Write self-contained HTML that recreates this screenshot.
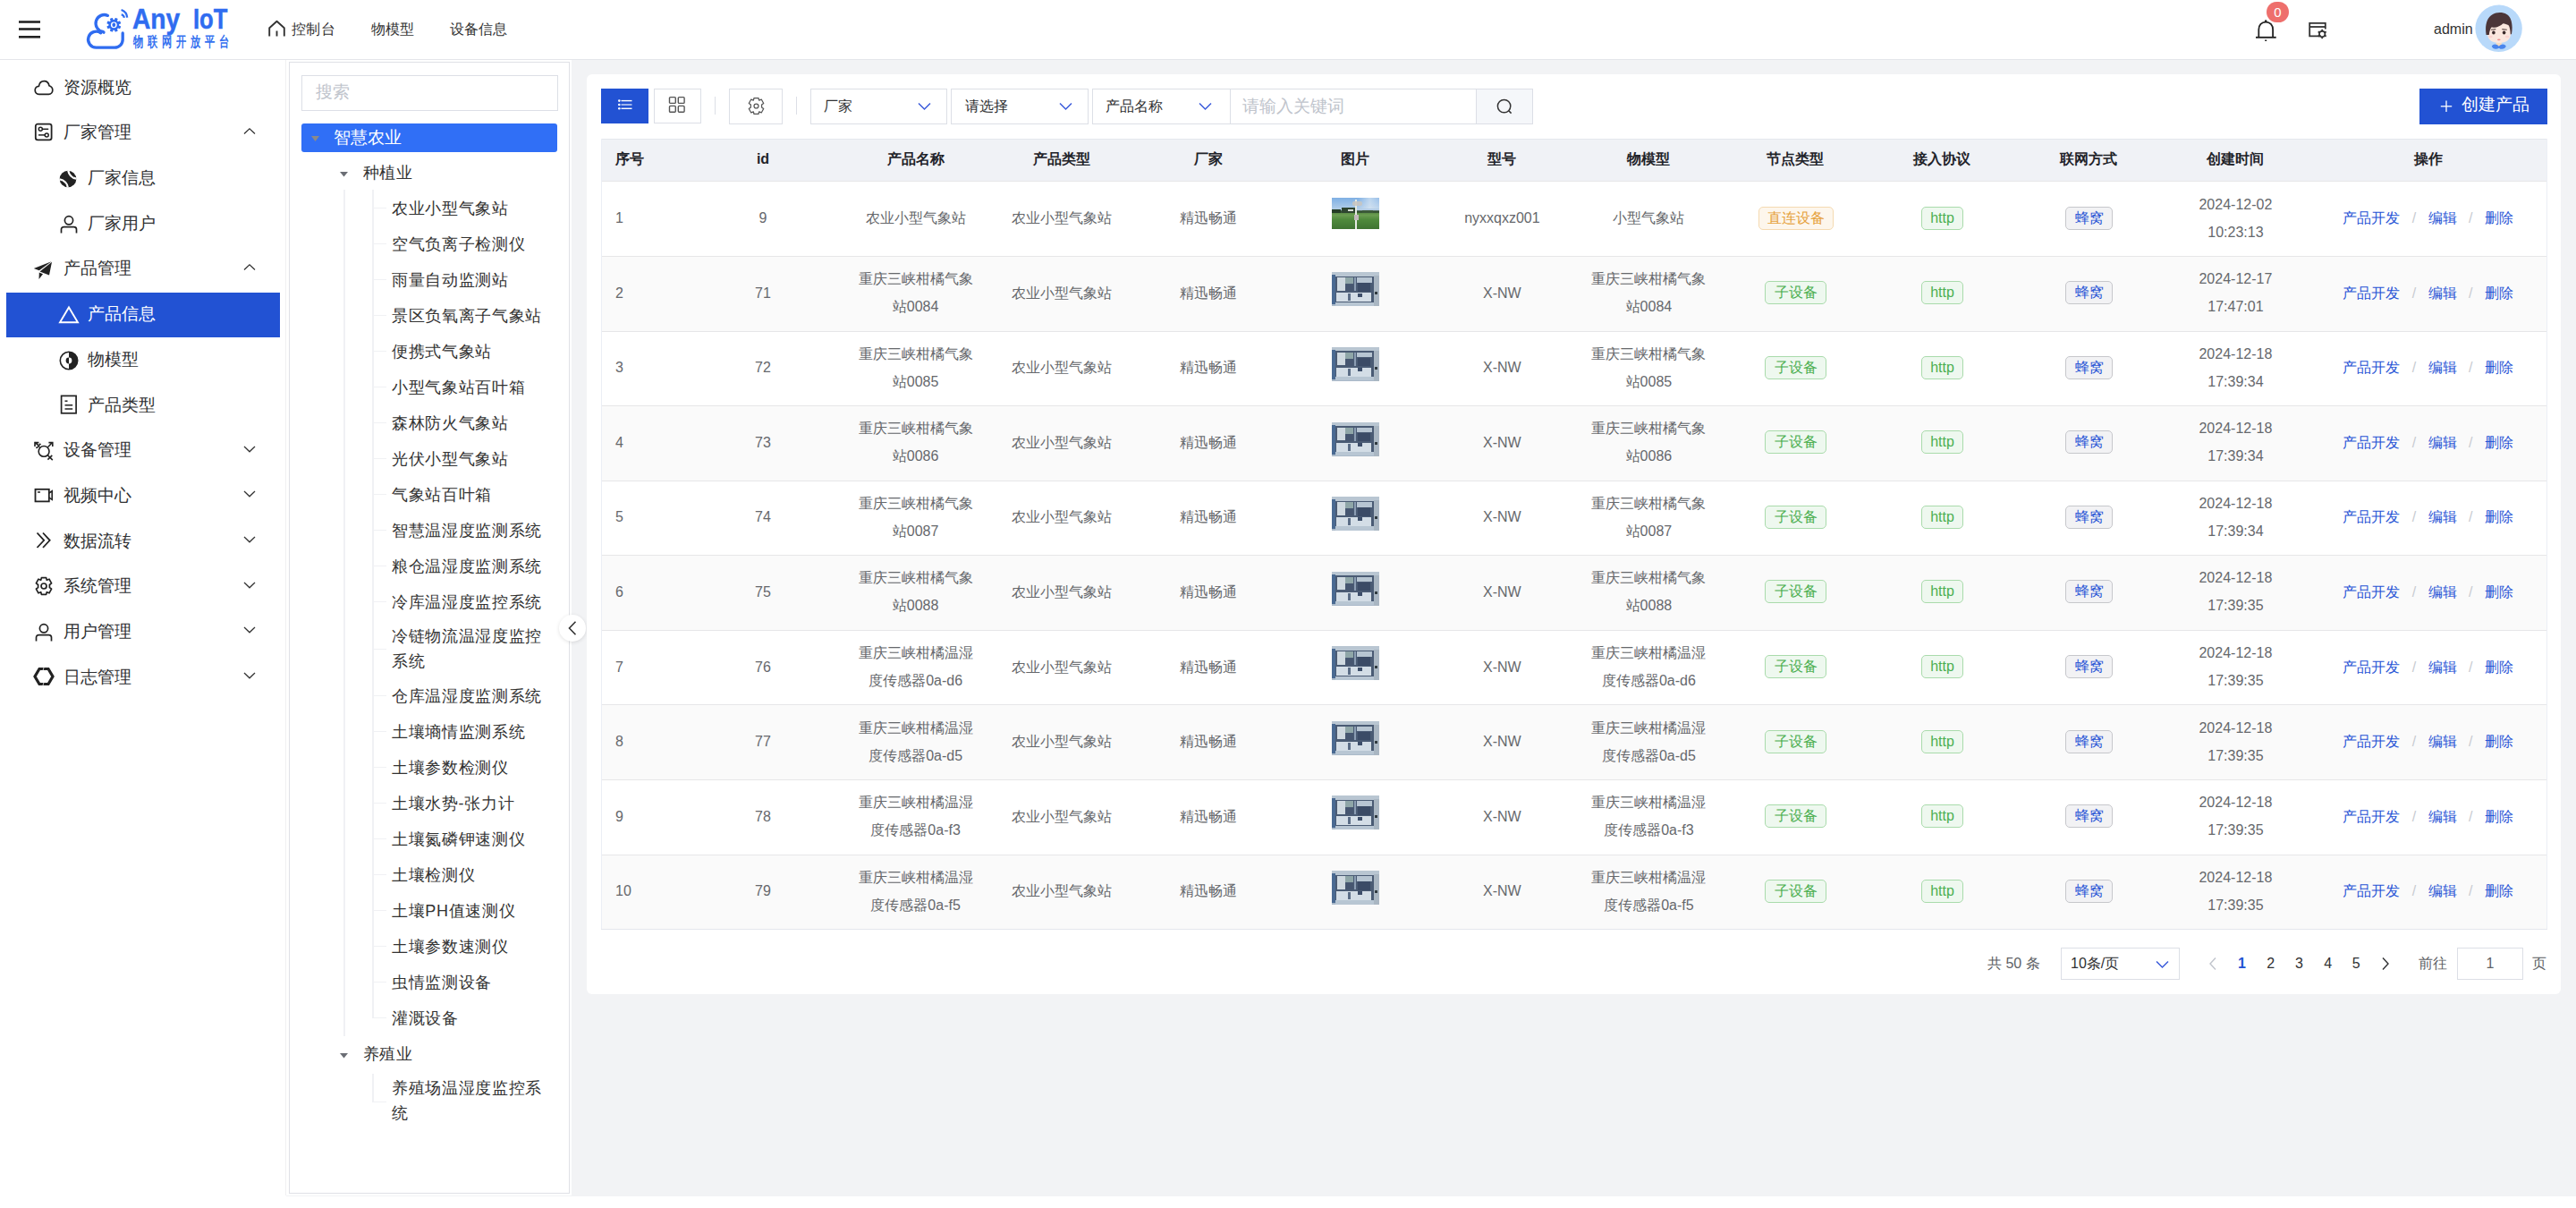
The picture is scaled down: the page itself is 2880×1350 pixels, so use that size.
<!DOCTYPE html>
<html><head><meta charset="utf-8"><title>Any IoT</title>
<style>
*{box-sizing:border-box;margin:0;padding:0}
html,body{width:2880px;height:1350px;overflow:hidden;background:#fff}
body{font-family:"Liberation Sans",sans-serif;color:#303133;position:relative}
.a{position:absolute;white-space:nowrap}
svg{position:absolute;overflow:visible}
.hdr{position:absolute;left:0;top:0;width:2880px;height:66px;background:#fff;border-bottom:1px solid #e4e6ea;box-sizing:content-box}
.mi{position:absolute;left:0;width:319px;font-size:19px;color:#303133;line-height:24px;height:24px}
.tt{position:absolute;font-size:18px;letter-spacing:0.65px;color:#333;line-height:28px;white-space:nowrap}
.th{position:absolute;top:154px;height:47px;line-height:47px;font-size:16px;font-weight:bold;color:#1f2329;text-align:center}
.td{position:absolute;font-size:16px;color:#66686c;line-height:31px;text-align:center;white-space:normal}
.tag{position:absolute;height:26px;line-height:24px;font-size:16px;border:1px solid;border-radius:5px;text-align:center}
.lnk{color:#2a56d6}
.sep{color:#c8cbd1;margin:0 13.4px}
</style></head><body>

<div class="hdr"></div>
<svg style="left:0;top:0" width="60" height="66"><g stroke="#222" stroke-width="2.6"><line x1="21" y1="24.5" x2="45" y2="24.5"/><line x1="21" y1="32.5" x2="45" y2="32.5"/><line x1="21" y1="41.3" x2="45" y2="41.3"/></g></svg>
<svg style="left:90px;top:4px" width="60" height="56" viewBox="0 0 60 56">
<g fill="none" stroke="#2f6cf0" stroke-width="3.3" stroke-linecap="round">
<path d="M30.5 13.4 A 9.5 9.5 0 1 0 24.9 31.4 L 26 32.2"/>
<path d="M22.7 32.8 A 9 9 0 1 0 17.5 49.2 L 38.2 49.2 A 9 9 0 0 0 47.2 40.2 L 47.2 33"/>
</g>
<g transform="translate(37.3,23.8)" fill="#2f6cf0">
<circle r="5.9"/>

<rect x="-1.6" y="-8" width="3.2" height="3.6" rx="0.6" transform="rotate(22.5)"/>
<rect x="-1.6" y="-8" width="3.2" height="3.6" rx="0.6" transform="rotate(67.5)"/>
<rect x="-1.6" y="-8" width="3.2" height="3.6" rx="0.6" transform="rotate(112.5)"/>
<rect x="-1.6" y="-8" width="3.2" height="3.6" rx="0.6" transform="rotate(157.5)"/>
<rect x="-1.6" y="-8" width="3.2" height="3.6" rx="0.6" transform="rotate(202.5)"/>
<rect x="-1.6" y="-8" width="3.2" height="3.6" rx="0.6" transform="rotate(247.5)"/>
<rect x="-1.6" y="-8" width="3.2" height="3.6" rx="0.6" transform="rotate(292.5)"/>
<rect x="-1.6" y="-8" width="3.2" height="3.6" rx="0.6" transform="rotate(337.5)"/>
<circle r="3.4" fill="#fff"/><ellipse rx="1.9" ry="2.4" fill="#2f6cf0"/></g>
<g fill="none" stroke="#2f6cf0" stroke-width="2.3" stroke-linecap="butt">
<path d="M45.6 7 A 10 10 0 0 1 52.2 15.6"/><path d="M45.8 12.2 A 4.8 4.8 0 0 1 49 15.8"/></g>
</svg>
<div class="a" style="left:148px;top:3px;font-size:32px;font-weight:bold;color:#2f6cf0;-webkit-text-stroke:0.5px #2f6cf0;line-height:36px;transform:scaleX(0.88);transform-origin:0 0">Any</div>
<div class="a" style="left:216px;top:3px;font-size:32px;font-weight:bold;color:#2f6cf0;-webkit-text-stroke:0.5px #2f6cf0;line-height:36px;transform:scaleX(0.80);transform-origin:0 0">IoT</div>
<div class="a" style="left:148.5px;top:35.4px;font-size:16px;font-weight:bold;color:#3471f0;line-height:24px;letter-spacing:6.9px;transform:scaleX(0.70);transform-origin:0 0">物联网开放平台</div>
<svg style="left:299px;top:22px" width="22" height="20" viewBox="0 0 22 20"><path d="M2.2 18.5 V9.2 L10.5 1.8 L18.8 9.2 V18.5" fill="none" stroke="#333" stroke-width="1.9" stroke-linejoin="round"/><line x1="10.5" y1="12.5" x2="10.5" y2="18.5" stroke="#333" stroke-width="1.9"/></svg>
<div class="a" style="left:325.5px;top:20.8px;font-size:16px;letter-spacing:0.6px;color:#333;line-height:24px">控制台</div>
<div class="a" style="left:415px;top:20.8px;font-size:16px;color:#333;line-height:24px">物模型</div>
<div class="a" style="left:503px;top:20.8px;font-size:16px;color:#333;line-height:24px">设备信息</div>
<svg style="left:2518px;top:18px" width="32" height="32" viewBox="0 0 32 32"><path d="M7.3 23.8 V15 C7.3 10 10.5 6.6 15.2 6.6 C19.9 6.6 23.1 10 23.1 15 V23.8" fill="none" stroke="#222" stroke-width="1.8"/><line x1="4" y1="23.8" x2="26.7" y2="23.8" stroke="#222" stroke-width="1.9"/><circle cx="15.2" cy="5.6" r="1.3" fill="#222"/><rect x="14.2" y="26.5" width="2" height="1.5" fill="#222"/></svg>
<div class="a" style="left:2534px;top:2px;width:25px;height:23px;border-radius:12px;background:#ee6f6c;color:#fff;font-size:15px;line-height:23px;text-align:center">0</div>
<svg style="left:2578px;top:22px" width="28" height="26" viewBox="0 0 28 26"><path d="M17 18.4 H4.2 V3.8 H21.8 V10.5" fill="none" stroke="#333" stroke-width="1.8"/><line x1="4.2" y1="8" x2="21.8" y2="8" stroke="#333" stroke-width="1.8"/><g transform="translate(18.2,16)"><circle r="3.2" fill="none" stroke="#333" stroke-width="1.8"/>
<rect x="-0.9" y="-5.2" width="1.8" height="2.2" fill="#333" transform="rotate(0)"/>
<rect x="-0.9" y="-5.2" width="1.8" height="2.2" fill="#333" transform="rotate(60)"/>
<rect x="-0.9" y="-5.2" width="1.8" height="2.2" fill="#333" transform="rotate(120)"/>
<rect x="-0.9" y="-5.2" width="1.8" height="2.2" fill="#333" transform="rotate(180)"/>
<rect x="-0.9" y="-5.2" width="1.8" height="2.2" fill="#333" transform="rotate(240)"/>
<rect x="-0.9" y="-5.2" width="1.8" height="2.2" fill="#333" transform="rotate(300)"/>
</g></svg>
<div class="a" style="left:2721px;top:21.2px;font-size:16px;color:#333;line-height:24px">admin</div>
<svg style="left:2767px;top:5px" width="54" height="54" viewBox="0 0 54 54">
<circle cx="26.6" cy="26.7" r="26.2" fill="#b8d9fa"/>
<path d="M24 41 L 29.5 41 L 30 47 L 23.5 47 Z" fill="#f6dcc0"/>
<path d="M14 27 C 14 17 19 12 27 12 C 35 12 40 17 40 27 L 40 33 C 39.5 39.5 35 43 27 43 C 19 43 14.5 39.5 14 33 Z" fill="#fbe7de"/>
<path d="M12.6 34 C 11 24 13 15 19.5 11.2 C 24 8.4 31 8.2 35.5 11 C 41.5 14.5 42.5 24 41 33 L 39.8 33.5 C 39.5 28 38.8 25 37.6 23.2 C 35.5 22 33.5 21.5 31.5 21.2 C 28 24.6 23 26.2 18.5 25.6 C 17 27.5 16.2 30 15.8 34 Z" fill="#4b3538"/>
<path d="M17.8 28.3 L 23.3 27.6" stroke="#5e4a48" stroke-width="1.1"/><path d="M30.3 27.6 L 35.8 28.3" stroke="#5e4a48" stroke-width="1.1"/>
<ellipse cx="20.9" cy="31.4" rx="1.8" ry="2" fill="#3a2a2a"/><ellipse cx="32.6" cy="31.4" rx="1.8" ry="2" fill="#3a2a2a"/>
<ellipse cx="17.5" cy="36" rx="2.2" ry="1.2" fill="#fbd3d0"/><ellipse cx="36" cy="36" rx="2.2" ry="1.2" fill="#fbd3d0"/>
<ellipse cx="26.8" cy="39.4" rx="1.8" ry="0.8" fill="#ef8f8f"/>
<path d="M18.8 46.8 C 20.5 43.5 24.5 44.2 26.8 46.8 C 29 44.2 33 43.5 34.8 46.8 C 33.5 50.3 29.5 50.5 26.8 48.8 C 24 50.5 20 50.3 18.8 46.8 Z" fill="#4a85ec"/>
</svg>
<div class="a" style="left:319px;top:67px;width:1px;height:1269px;background:#f0f0f2"></div>
<div class="a" style="left:7px;top:327px;width:306px;height:50px;background:#2252d3"></div>
<svg style="left:38px;top:86.0px" width="22" height="22" viewBox="0 0 22 22"><path d="M5.5 19.3 C 2.8 19.3 1.2 17.2 1.2 14.8 C 1.2 12.4 3 10.4 5.4 10.3 C 6 6.8 8.3 4.6 11.3 4.6 C 14.3 4.6 16.4 6.6 17 9.8 C 19.2 10.5 20.8 12.4 20.8 14.8 C 20.8 17.3 18.9 19.3 16.5 19.3 Z" fill="none" stroke="#222" stroke-width="1.7"/></svg>
<div class="a" style="left:70.7px;top:85.70px;font-size:19px;line-height:24px;color:#303133">资源概览</div>
<svg style="left:38px;top:136.69px" width="22" height="22" viewBox="0 0 22 22"><rect x="1.8" y="1.6" width="17.8" height="17.8" rx="2.3" fill="none" stroke="#222" stroke-width="1.8"/><circle cx="7.3" cy="7.3" r="2" fill="none" stroke="#222" stroke-width="1.5"/><line x1="9.3" y1="7.3" x2="16.2" y2="7.3" stroke="#222" stroke-width="1.5"/><circle cx="14.2" cy="13.9" r="2" fill="none" stroke="#222" stroke-width="1.5"/><line x1="5" y1="13.9" x2="12.2" y2="13.9" stroke="#222" stroke-width="1.5"/></svg>
<div class="a" style="left:70.7px;top:136.39px;font-size:19px;line-height:24px;color:#303133">厂家管理</div>
<svg style="left:271px;top:141.69px" width="16" height="10"><path d="M2 7.5 L 8 1.8 L 14 7.5" fill="none" stroke="#333" stroke-width="1.3"/></svg>
<svg style="left:65.0px;top:189.38px" width="22" height="22" viewBox="0 0 22 22"><circle cx="11" cy="11" r="9.3" fill="#222"/><path d="M11.2 1.5 Q 12.5 9 20.5 10.8 M 1.5 11.2 Q 9.5 13 10.8 20.5" fill="none" stroke="#fff" stroke-width="2.2"/><path d="M13.5 4.5 L 15.5 6.5 M 15.5 6.8 L 17.6 8.8 M 4.5 13.5 L 6.5 15.5 M 6.8 15.5 L 8.8 17.6" stroke="#222" stroke-width="0.9"/></svg>
<div class="a" style="left:97.5px;top:187.08px;font-size:19px;line-height:24px;color:#303133">厂家信息</div>
<svg style="left:65.5px;top:240.07px" width="22" height="22" viewBox="0 0 22 22"><circle cx="11" cy="6.3" r="4.6" fill="none" stroke="#222" stroke-width="1.7"/><path d="M2.5 20.5 V16.5 C 2.5 14.8 3.6 13.6 5.4 13.6 H16.6 C 18.4 13.6 19.5 14.8 19.5 16.5 V20.5" fill="none" stroke="#222" stroke-width="1.7"/></svg>
<div class="a" style="left:97.5px;top:237.77px;font-size:19px;line-height:24px;color:#303133">厂家用户</div>
<svg style="left:37px;top:290.76px" width="22" height="22" viewBox="0 0 22 22"><path d="M0.8 9 L 20.5 1.2 L 6.8 11.2 Z" fill="#222"/><path d="M7.5 12.6 L 21 1.8 L 18 16.5 Z" fill="#222"/><path d="M6.8 13.6 L 11 15.3 L 6.5 21 Z" fill="#222"/></svg>
<div class="a" style="left:70.7px;top:288.46px;font-size:19px;line-height:24px;color:#303133">产品管理</div>
<svg style="left:271px;top:293.76px" width="16" height="10"><path d="M2 7.5 L 8 1.8 L 14 7.5" fill="none" stroke="#333" stroke-width="1.3"/></svg>
<svg style="left:65.5px;top:339.45px" width="22" height="22" viewBox="0 0 22 22"><path d="M11 4.4 L 21 21.2 H 1 Z" fill="none" stroke="#fff" stroke-width="1.9" stroke-linejoin="miter"/></svg>
<div class="a" style="left:97.5px;top:339.15px;font-size:19px;line-height:24px;color:#fff">产品信息</div>
<svg style="left:65.5px;top:391.64px" width="22" height="22" viewBox="0 0 22 22"><circle cx="11" cy="11" r="9.7" fill="none" stroke="#222" stroke-width="1.6"/><path d="M11 1.3 A 9.7 9.7 0 0 1 11 20.7 Z" fill="#222"/><path d="M11 7.6 A 3.4 3.4 0 0 0 11 14.4 Z" fill="#222"/><path d="M11 7.6 A 3.4 3.4 0 0 1 11 14.4 Z" fill="#fff"/></svg>
<div class="a" style="left:97.5px;top:389.84px;font-size:19px;line-height:24px;color:#303133">物模型</div>
<svg style="left:65.5px;top:440.83px" width="22" height="22" viewBox="0 0 22 22"><rect x="2.6" y="1.4" width="16.5" height="19.4" fill="none" stroke="#222" stroke-width="1.7"/><line x1="6.5" y1="7.2" x2="9.5" y2="7.2" stroke="#222" stroke-width="1.5"/><line x1="6.5" y1="11.8" x2="15.2" y2="11.8" stroke="#222" stroke-width="1.5"/><line x1="6.5" y1="16" x2="15.2" y2="16" stroke="#222" stroke-width="1.5"/></svg>
<div class="a" style="left:97.5px;top:440.53px;font-size:19px;line-height:24px;color:#303133">产品类型</div>
<svg style="left:38px;top:491.52px" width="22" height="22" viewBox="0 0 22 22"><circle cx="11.1" cy="12.4" r="5.9" fill="none" stroke="#222" stroke-width="1.6"/><path d="M15.4 7.7 L 20.8 2.2 M 16.4 2.6 H 20.8 V 7" fill="none" stroke="#222" stroke-width="1.6"/><path d="M6.8 7.7 L 1 2.2 M 5.4 2.6 H 1 V 7 M 2.5 8.9 L 7.4 3.9" fill="none" stroke="#222" stroke-width="1.6"/><path d="M15.4 16.7 L 20.8 22.1 M 15.4 21.6 L 20.3 16.9" fill="none" stroke="#222" stroke-width="1.6"/></svg>
<div class="a" style="left:70.7px;top:491.22px;font-size:19px;line-height:24px;color:#303133">设备管理</div>
<svg style="left:271px;top:496.52px" width="16" height="10"><path d="M2 2 L 8 7.8 L 14 2" fill="none" stroke="#333" stroke-width="1.3"/></svg>
<svg style="left:38px;top:542.21px" width="22" height="22" viewBox="0 0 22 22"><rect x="1.5" y="4.8" width="15.3" height="13.6" fill="none" stroke="#222" stroke-width="1.8"/><path d="M16.8 9 L 20.2 6.8 V 16.4 L 16.8 14.2" fill="none" stroke="#222" stroke-width="1.6"/><line x1="4" y1="8" x2="7" y2="8" stroke="#222" stroke-width="1.5"/></svg>
<div class="a" style="left:70.7px;top:541.91px;font-size:19px;line-height:24px;color:#303133">视频中心</div>
<svg style="left:271px;top:547.21px" width="16" height="10"><path d="M2 2 L 8 7.8 L 14 2" fill="none" stroke="#333" stroke-width="1.3"/></svg>
<svg style="left:38px;top:592.9px" width="22" height="22" viewBox="0 0 22 22"><path d="M3.5 2.5 L 11.2 10.8 L 3.5 19 M 10 2.5 L 17.7 10.8 L 10 19" fill="none" stroke="#222" stroke-width="1.8"/></svg>
<div class="a" style="left:70.7px;top:592.60px;font-size:19px;line-height:24px;color:#303133">数据流转</div>
<svg style="left:271px;top:597.90px" width="16" height="10"><path d="M2 2 L 8 7.8 L 14 2" fill="none" stroke="#333" stroke-width="1.3"/></svg>
<svg style="left:38px;top:643.59px" width="22" height="22" viewBox="0 0 22 22"><path d="M8.4 1.6 H13.6 L14.3 4.3 L17 3.2 L19.6 7.8 L17.4 9.5 V12.5 L19.6 14.2 L17 18.8 L14.3 17.7 L13.6 20.4 H8.4 L7.7 17.7 L5 18.8 L2.4 14.2 L4.6 12.5 V9.5 L2.4 7.8 L5 3.2 L7.7 4.3 Z" fill="none" stroke="#222" stroke-width="1.7" stroke-linejoin="round"/><circle cx="11" cy="11" r="3" fill="none" stroke="#222" stroke-width="1.7"/></svg>
<div class="a" style="left:70.7px;top:643.29px;font-size:19px;line-height:24px;color:#303133">系统管理</div>
<svg style="left:271px;top:648.59px" width="16" height="10"><path d="M2 2 L 8 7.8 L 14 2" fill="none" stroke="#333" stroke-width="1.3"/></svg>
<svg style="left:38px;top:696.28px" width="22" height="22" viewBox="0 0 22 22"><circle cx="11" cy="6.3" r="4.6" fill="none" stroke="#222" stroke-width="1.7"/><path d="M2.5 20.5 V16.5 C 2.5 14.8 3.6 13.6 5.4 13.6 H16.6 C 18.4 13.6 19.5 14.8 19.5 16.5 V20.5" fill="none" stroke="#222" stroke-width="1.7"/></svg>
<div class="a" style="left:70.7px;top:693.98px;font-size:19px;line-height:24px;color:#303133">用户管理</div>
<svg style="left:271px;top:699.28px" width="16" height="10"><path d="M2 2 L 8 7.8 L 14 2" fill="none" stroke="#333" stroke-width="1.3"/></svg>
<svg style="left:38px;top:744.97px" width="22" height="22" viewBox="0 0 22 22"><path d="M6 2.5 H16 L 21 11 L 16 19.5 H6 L 1 11 Z" fill="none" stroke="#222" stroke-width="3.2" stroke-linejoin="miter"/><line x1="11" y1="1" x2="10" y2="4.5" stroke="#fff" stroke-width="0.7"/><line x1="11" y1="17.5" x2="10" y2="21" stroke="#fff" stroke-width="0.7"/></svg>
<div class="a" style="left:70.7px;top:744.67px;font-size:19px;line-height:24px;color:#303133">日志管理</div>
<svg style="left:271px;top:749.97px" width="16" height="10"><path d="M2 2 L 8 7.8 L 14 2" fill="none" stroke="#333" stroke-width="1.3"/></svg>
<div class="a" style="left:320px;top:67px;width:2560px;height:1269.5px;background:#f2f3f5"></div>
<div class="a" style="left:320px;top:67px;width:319px;height:1269px;background:#fff"></div>
<div class="a" style="left:323px;top:69px;width:314px;height:1265px;border:1px solid #dfe1e6"></div>
<div class="a" style="left:337px;top:84px;width:287px;height:40px;border:1px solid #dcdfe6;background:#fff"></div>
<div class="a" style="left:353px;top:91px;font-size:19px;line-height:24px;color:#c0c4cc">搜索</div>
<div class="a" style="left:337px;top:138px;width:286px;height:32px;border-radius:3px;background:#306ff6"></div>
<svg style="left:346px;top:150px" width="14" height="10"><path d="M2 2 L 11 2 L 6.5 8 Z" fill="#8a8a8a"/></svg>
<div class="a" style="left:373px;top:141px;font-size:19px;line-height:26px;color:#fff">智慧农业</div>
<svg style="left:378px;top:190px" width="14" height="10"><path d="M2 2 L 11 2 L 6.5 7.5 Z" fill="#6b6e75"/></svg>
<div class="tt" style="left:405.5px;top:179px">种植业</div>
<div class="tt" style="left:438px;top:218.60px">农业小型气象站</div>
<div class="tt" style="left:438px;top:258.60px">空气负离子检测仪</div>
<div class="tt" style="left:438px;top:298.60px">雨量自动监测站</div>
<div class="tt" style="left:438px;top:338.60px">景区负氧离子气象站</div>
<div class="tt" style="left:438px;top:378.60px">便携式气象站</div>
<div class="tt" style="left:438px;top:418.60px">小型气象站百叶箱</div>
<div class="tt" style="left:438px;top:458.60px">森林防火气象站</div>
<div class="tt" style="left:438px;top:498.60px">光伏小型气象站</div>
<div class="tt" style="left:438px;top:538.60px">气象站百叶箱</div>
<div class="tt" style="left:438px;top:578.60px">智慧温湿度监测系统</div>
<div class="tt" style="left:438px;top:618.60px">粮仓温湿度监测系统</div>
<div class="tt" style="left:438px;top:658.60px">冷库温湿度监控系统</div>
<div class="tt" style="left:438px;top:697.00px">冷链物流温湿度监控</div>
<div class="tt" style="left:438px;top:724.80px">系统</div>
<div class="tt" style="left:438px;top:763.80px">仓库温湿度监测系统</div>
<div class="tt" style="left:438px;top:803.80px">土壤墒情监测系统</div>
<div class="tt" style="left:438px;top:843.80px">土壤参数检测仪</div>
<div class="tt" style="left:438px;top:883.80px">土壤水势-张力计</div>
<div class="tt" style="left:438px;top:923.80px">土壤氮磷钾速测仪</div>
<div class="tt" style="left:438px;top:963.80px">土壤检测仪</div>
<div class="tt" style="left:438px;top:1003.80px">土壤PH值速测仪</div>
<div class="tt" style="left:438px;top:1043.80px">土壤参数速测仪</div>
<div class="tt" style="left:438px;top:1083.80px">虫情监测设备</div>
<div class="tt" style="left:438px;top:1123.80px">灌溉设备</div>
<div class="a" style="left:384px;top:212px;width:1.5px;height:946px;background:#f0f1f4"></div>
<div class="a" style="left:416px;top:212px;width:1.5px;height:925.8px;background:#f0f1f4"></div>
<div class="a" style="left:416px;top:232.10px;width:16px;height:1.2px;background:#f0f1f4"></div>
<div class="a" style="left:416px;top:272.10px;width:16px;height:1.2px;background:#f0f1f4"></div>
<div class="a" style="left:416px;top:312.10px;width:16px;height:1.2px;background:#f0f1f4"></div>
<div class="a" style="left:416px;top:352.10px;width:16px;height:1.2px;background:#f0f1f4"></div>
<div class="a" style="left:416px;top:392.10px;width:16px;height:1.2px;background:#f0f1f4"></div>
<div class="a" style="left:416px;top:432.10px;width:16px;height:1.2px;background:#f0f1f4"></div>
<div class="a" style="left:416px;top:472.10px;width:16px;height:1.2px;background:#f0f1f4"></div>
<div class="a" style="left:416px;top:512.10px;width:16px;height:1.2px;background:#f0f1f4"></div>
<div class="a" style="left:416px;top:552.10px;width:16px;height:1.2px;background:#f0f1f4"></div>
<div class="a" style="left:416px;top:592.10px;width:16px;height:1.2px;background:#f0f1f4"></div>
<div class="a" style="left:416px;top:632.10px;width:16px;height:1.2px;background:#f0f1f4"></div>
<div class="a" style="left:416px;top:672.10px;width:16px;height:1.2px;background:#f0f1f4"></div>
<div class="a" style="left:416px;top:724.70px;width:16px;height:1.2px;background:#f0f1f4"></div>
<div class="a" style="left:416px;top:777.30px;width:16px;height:1.2px;background:#f0f1f4"></div>
<div class="a" style="left:416px;top:817.30px;width:16px;height:1.2px;background:#f0f1f4"></div>
<div class="a" style="left:416px;top:857.30px;width:16px;height:1.2px;background:#f0f1f4"></div>
<div class="a" style="left:416px;top:897.30px;width:16px;height:1.2px;background:#f0f1f4"></div>
<div class="a" style="left:416px;top:937.30px;width:16px;height:1.2px;background:#f0f1f4"></div>
<div class="a" style="left:416px;top:977.30px;width:16px;height:1.2px;background:#f0f1f4"></div>
<div class="a" style="left:416px;top:1017.30px;width:16px;height:1.2px;background:#f0f1f4"></div>
<div class="a" style="left:416px;top:1057.30px;width:16px;height:1.2px;background:#f0f1f4"></div>
<div class="a" style="left:416px;top:1097.30px;width:16px;height:1.2px;background:#f0f1f4"></div>
<div class="a" style="left:416px;top:1137.30px;width:16px;height:1.2px;background:#f0f1f4"></div>
<svg style="left:378px;top:1175px" width="14" height="10"><path d="M2 2 L 11 2 L 6.5 7.5 Z" fill="#6b6e75"/></svg>
<div class="tt" style="left:405.5px;top:1163.8px">养殖业</div>
<div class="tt" style="left:438px;top:1202.2px">养殖场温湿度监控系</div>
<div class="tt" style="left:438px;top:1230px">统</div>
<div class="a" style="left:416px;top:1200px;width:1.5px;height:31px;background:#f0f1f4"></div>
<div class="a" style="left:416px;top:1230.8px;width:16px;height:1.2px;background:#f0f1f4"></div>
<div class="a" style="left:625px;top:687px;width:30px;height:30px;border-radius:50%;background:#fff;box-shadow:0 1px 4px rgba(0,0,0,0.12)"></div>
<svg style="left:630px;top:692px" width="20" height="20"><path d="M13.5 2.8 L 6.5 10 L 13.5 17.2" fill="none" stroke="#333" stroke-width="1.6"/></svg>
<div class="a" style="left:656px;top:83px;width:2207px;height:1028px;background:#fff;border-radius:6px"></div>
<div class="a" style="left:672px;top:99px;width:53px;height:39px;background:#2252d3"></div>
<svg style="left:688px;top:108px" width="22" height="20"><g fill="#fff"><circle cx="4.3" cy="4.6" r="1.3"/><circle cx="4.3" cy="9" r="1.3"/><circle cx="4.3" cy="13.3" r="1.3"/><rect x="6.5" y="3.9" width="12" height="1.4"/><rect x="6.5" y="8.3" width="12" height="1.4" opacity="0.8"/><rect x="6.5" y="12.6" width="12" height="1.4"/></g></svg>
<div class="a" style="left:731px;top:99px;width:53px;height:39px;border:1px solid #dcdfe6"></div>
<svg style="left:744px;top:104px" width="26" height="26"><g fill="none" stroke="#555" stroke-width="1.4"><rect x="4.5" y="4.6" width="6.8" height="6.8" rx="1"/><rect x="14.3" y="4.6" width="6.8" height="6.8" rx="1"/><rect x="4.5" y="14.4" width="6.8" height="6.8" rx="1"/><rect x="14.3" y="14.4" width="6.8" height="6.8" rx="1"/></g></svg>
<div class="a" style="left:799px;top:108px;width:1px;height:20px;background:#dcdfe6"></div>
<div class="a" style="left:815px;top:99px;width:60px;height:40px;border:1px solid #dcdfe6"></div>
<svg style="left:835px;top:108px" width="21" height="21" viewBox="0 0 22 22"><path d="M8.4 1.6 H13.6 L14.3 4.3 L17 3.2 L19.6 7.8 L17.4 9.5 V12.5 L19.6 14.2 L17 18.8 L14.3 17.7 L13.6 20.4 H8.4 L7.7 17.7 L5 18.8 L2.4 14.2 L4.6 12.5 V9.5 L2.4 7.8 L5 3.2 L7.7 4.3 Z" fill="none" stroke="#555" stroke-width="1.3" stroke-linejoin="round"/><circle cx="11" cy="11" r="2.6" fill="none" stroke="#555" stroke-width="1.3"/></svg>
<div class="a" style="left:890px;top:108px;width:1px;height:20px;background:#dcdfe6"></div>
<div class="a" style="left:906px;top:99px;width:153px;height:40px;border:1px solid #dcdfe6"></div>
<div class="a" style="left:921px;top:107px;font-size:16px;line-height:24px;color:#303133">厂家</div>
<svg style="left:1025px;top:113px" width="18" height="12"><path d="M2 2.5 L 8.5 9 L 15 2.5" fill="none" stroke="#3b5bdb" stroke-width="1.5"/></svg>
<div class="a" style="left:1063px;top:99px;width:154px;height:40px;border:1px solid #dcdfe6"></div>
<div class="a" style="left:1079px;top:107px;font-size:16px;line-height:24px;color:#303133">请选择</div>
<svg style="left:1183px;top:113px" width="18" height="12"><path d="M2 2.5 L 8.5 9 L 15 2.5" fill="none" stroke="#3b5bdb" stroke-width="1.5"/></svg>
<div class="a" style="left:1221px;top:99px;width:493px;height:40px;border:1px solid #dcdfe6"></div>
<div class="a" style="left:1236px;top:107px;font-size:16px;line-height:24px;color:#303133">产品名称</div>
<svg style="left:1339px;top:113px" width="18" height="12"><path d="M2 2.5 L 8.5 9 L 15 2.5" fill="none" stroke="#3b5bdb" stroke-width="1.5"/></svg>
<div class="a" style="left:1375px;top:100px;width:1px;height:38px;background:#dcdfe6"></div>
<div class="a" style="left:1389px;top:105px;font-size:18.7px;line-height:28px;color:#c0c4cc">请输入关键词</div>
<div class="a" style="left:1650px;top:100px;width:63px;height:38px;background:#f5f7fa;border-left:1px solid #dcdfe6"></div>
<svg style="left:1670px;top:107px" width="24" height="24"><circle cx="11.6" cy="11.6" r="7.2" fill="none" stroke="#333" stroke-width="1.5"/><line x1="16.8" y1="16.8" x2="19.6" y2="19.6" stroke="#333" stroke-width="1.6"/></svg>
<div class="a" style="left:2705px;top:99px;width:143px;height:40px;background:#2252d3"></div>
<svg style="left:2727px;top:110.5px" width="16" height="16"><g stroke="#fff" stroke-width="1.3"><line x1="8" y1="1.5" x2="8" y2="14"/><line x1="1.8" y1="7.8" x2="14.2" y2="7.8"/></g></svg>
<div class="a" style="left:2751.5px;top:103.4px;font-size:19px;line-height:28px;color:#fff">创建产品</div>
<div class="a" style="left:672px;top:155px;width:2176px;height:47px;background:#f0f2f6;border-top:1px solid #e4e7ed"></div>
<div class="th" style="left:688px;width:76.2px;text-align:left">序号</div>
<div class="th" style="left:764.2px;width:177.6px">id</div>
<div class="th" style="left:941.8px;width:163.6px">产品名称</div>
<div class="th" style="left:1105.4px;width:164.0px">产品类型</div>
<div class="th" style="left:1269.4px;width:164.0px">厂家</div>
<div class="th" style="left:1433.4px;width:164.0px">图片</div>
<div class="th" style="left:1597.4px;width:164.0px">型号</div>
<div class="th" style="left:1761.4px;width:164.0px">物模型</div>
<div class="th" style="left:1925.4px;width:164.0px">节点类型</div>
<div class="th" style="left:2089.4px;width:164.0px">接入协议</div>
<div class="th" style="left:2253.4px;width:164.0px">联网方式</div>
<div class="th" style="left:2417.4px;width:164.0px">创建时间</div>
<div class="th" style="left:2581.4px;width:266.6px">操作</div>
<div class="a" style="left:672px;top:202.40px;width:2176px;height:83.58px;background:#fff;border-top:1px solid #e6e6e8"></div>
<div class="td" style="left:688px;top:228.09px;text-align:left;color:#66686c">1</div>
<div class="td" style="left:764.2px;width:177.6px;top:228.09px;color:#66686c">9</div>
<div class="td" style="left:941.8px;width:163.6px;top:228.09px;color:#66686c">农业小型气象站</div>
<div class="td" style="left:1105.4px;width:164.0px;top:228.09px;color:#66686c">农业小型气象站</div>
<div class="td" style="left:1269.4px;width:164.0px;top:228.09px;color:#66686c">精迅畅通</div>
<div class="a" style="left:1489px;top:221.00px;width:53px;height:35px"><div style="position:absolute;left:0;top:0;width:53px;height:35px;overflow:hidden;background:linear-gradient(180deg,#7fb0e4 0%,#a8c8e8 30%,#b9cfe4 40%,#2f4a2e 42%,#3a5a34 48%,#5d8f47 50%,#6b9d52 55%,#4f8a3c 70%,#3f7432 100%)"><div style="position:absolute;left:0;top:0;width:53px;height:12px;background:linear-gradient(90deg,rgba(255,255,255,0) 0%,rgba(255,255,255,0) 55%,rgba(230,238,245,0.6) 80%,rgba(255,255,255,0.2) 100%)"></div><div style="position:absolute;left:11px;top:11px;width:15px;height:6px;background:#2e4530"></div><div style="position:absolute;left:18px;top:13px;width:6px;height:2px;background:#d8dcd6"></div><div style="position:absolute;left:0;top:13px;width:10px;height:4px;background:#243d25"></div><div style="position:absolute;left:34px;top:14px;width:12px;height:3px;background:#3c5a3a"></div><div style="position:absolute;left:26px;top:2px;width:1.5px;height:33px;background:#e6ebe4"></div><div style="position:absolute;left:23px;top:4px;width:11px;height:5px;background:#c9c6bf;border-radius:2px;opacity:0.85"></div><div style="position:absolute;left:25px;top:19px;width:5px;height:6px;background:#c3b9bd"></div></div></div>
<div class="td" style="left:1597.4px;width:164.0px;top:228.09px;color:#66686c">nyxxqxz001</div>
<div class="td" style="left:1761.4px;width:164.0px;top:228.09px;color:#66686c">小型气象站</div>
<div class="tag" style="left:1965.5px;top:230.59px;width:84px;color:#e6a23c;background:#fdf6ec;border-color:#f5dab1">直连设备</div>
<div class="tag" style="left:2148px;top:230.59px;width:47px;color:#4caf50;background:#eef8ef;border-color:#a9dbab">http</div>
<div class="tag" style="left:2309px;top:230.59px;width:53px;color:#2a56d6;background:#f2f2f4;border-color:#c6c7cb">蜂窝</div>
<div class="td" style="left:2417.4px;width:164.0px;top:212.59px;color:#66686c">2024-12-02<br>10:23:13</div>
<div class="td" style="left:2581.4px;width:266.6px;top:228.09px"><span class="lnk">产品开发</span><span class="sep">/</span><span class="lnk">编辑</span><span class="sep">/</span><span class="lnk">删除</span></div>
<div class="a" style="left:672px;top:285.98px;width:2176px;height:83.58px;background:#fafafa;border-top:1px solid #e6e6e8"></div>
<div class="td" style="left:688px;top:311.67px;text-align:left;color:#66686c">2</div>
<div class="td" style="left:764.2px;width:177.6px;top:311.67px;color:#66686c">71</div>
<div class="td" style="left:941.8px;width:163.6px;top:296.17px;color:#66686c">重庆三峡柑橘气象<br>站0084</div>
<div class="td" style="left:1105.4px;width:164.0px;top:311.67px;color:#66686c">农业小型气象站</div>
<div class="td" style="left:1269.4px;width:164.0px;top:311.67px;color:#66686c">精迅畅通</div>
<div class="a" style="left:1489px;top:304.38px;width:53px;height:38px"><div style="position:absolute;left:0;top:0;width:53px;height:38px;overflow:hidden;background:#aab9c9"><div style="position:absolute;left:0;top:0;width:53px;height:5px;background:#b9c6d2"></div><div style="position:absolute;left:0;top:3px;width:4px;height:33px;background:#4a6a92"></div><div style="position:absolute;left:4px;top:4.5px;width:43px;height:29px;background:#4a5b74"></div><div style="position:absolute;left:5.5px;top:6px;width:9px;height:14.5px;background:#cfd9e0"></div><div style="position:absolute;left:14.7px;top:6px;width:9.7px;height:7px;background:#8fa6a8"></div><div style="position:absolute;left:14.7px;top:13.5px;width:9.7px;height:7.5px;background:#465670"></div><div style="position:absolute;left:25px;top:6px;width:2px;height:15px;background:#8b9db3"></div><div style="position:absolute;left:28px;top:6px;width:17px;height:5.5px;background:#b7c5d2"></div><div style="position:absolute;left:28.8px;top:12px;width:14px;height:9.5px;background:#3b4b66"></div><div style="position:absolute;left:5.4px;top:23px;width:38.7px;height:10px;background:#d3dde6"></div><div style="position:absolute;left:17.5px;top:24px;width:3.5px;height:8px;background:#5a6c86"></div><div style="position:absolute;left:28.8px;top:23.3px;width:5.6px;height:4px;background:#3d4e6a"></div><div style="position:absolute;left:4px;top:33.3px;width:45px;height:4.2px;background:#b8c6d3"></div><div style="position:absolute;left:47px;top:4px;width:6px;height:34px;background:#a9b6c2"></div><div style="position:absolute;left:48px;top:22px;width:3px;height:3px;background:#303a40"></div></div></div>
<div class="td" style="left:1597.4px;width:164.0px;top:311.67px;color:#66686c">X-NW</div>
<div class="td" style="left:1761.4px;width:164.0px;top:296.17px;color:#66686c">重庆三峡柑橘气象<br>站0084</div>
<div class="tag" style="left:1973px;top:314.17px;width:69px;color:#4caf50;background:#eef8ef;border-color:#a9dbab">子设备</div>
<div class="tag" style="left:2148px;top:314.17px;width:47px;color:#4caf50;background:#eef8ef;border-color:#a9dbab">http</div>
<div class="tag" style="left:2309px;top:314.17px;width:53px;color:#2a56d6;background:#f2f2f4;border-color:#c6c7cb">蜂窝</div>
<div class="td" style="left:2417.4px;width:164.0px;top:296.17px;color:#66686c">2024-12-17<br>17:47:01</div>
<div class="td" style="left:2581.4px;width:266.6px;top:311.67px"><span class="lnk">产品开发</span><span class="sep">/</span><span class="lnk">编辑</span><span class="sep">/</span><span class="lnk">删除</span></div>
<div class="a" style="left:672px;top:369.56px;width:2176px;height:83.58px;background:#fff;border-top:1px solid #e6e6e8"></div>
<div class="td" style="left:688px;top:395.25px;text-align:left;color:#66686c">3</div>
<div class="td" style="left:764.2px;width:177.6px;top:395.25px;color:#66686c">72</div>
<div class="td" style="left:941.8px;width:163.6px;top:379.75px;color:#66686c">重庆三峡柑橘气象<br>站0085</div>
<div class="td" style="left:1105.4px;width:164.0px;top:395.25px;color:#66686c">农业小型气象站</div>
<div class="td" style="left:1269.4px;width:164.0px;top:395.25px;color:#66686c">精迅畅通</div>
<div class="a" style="left:1489px;top:387.96px;width:53px;height:38px"><div style="position:absolute;left:0;top:0;width:53px;height:38px;overflow:hidden;background:#aab9c9"><div style="position:absolute;left:0;top:0;width:53px;height:5px;background:#b9c6d2"></div><div style="position:absolute;left:0;top:3px;width:4px;height:33px;background:#4a6a92"></div><div style="position:absolute;left:4px;top:4.5px;width:43px;height:29px;background:#4a5b74"></div><div style="position:absolute;left:5.5px;top:6px;width:9px;height:14.5px;background:#cfd9e0"></div><div style="position:absolute;left:14.7px;top:6px;width:9.7px;height:7px;background:#8fa6a8"></div><div style="position:absolute;left:14.7px;top:13.5px;width:9.7px;height:7.5px;background:#465670"></div><div style="position:absolute;left:25px;top:6px;width:2px;height:15px;background:#8b9db3"></div><div style="position:absolute;left:28px;top:6px;width:17px;height:5.5px;background:#b7c5d2"></div><div style="position:absolute;left:28.8px;top:12px;width:14px;height:9.5px;background:#3b4b66"></div><div style="position:absolute;left:5.4px;top:23px;width:38.7px;height:10px;background:#d3dde6"></div><div style="position:absolute;left:17.5px;top:24px;width:3.5px;height:8px;background:#5a6c86"></div><div style="position:absolute;left:28.8px;top:23.3px;width:5.6px;height:4px;background:#3d4e6a"></div><div style="position:absolute;left:4px;top:33.3px;width:45px;height:4.2px;background:#b8c6d3"></div><div style="position:absolute;left:47px;top:4px;width:6px;height:34px;background:#a9b6c2"></div><div style="position:absolute;left:48px;top:22px;width:3px;height:3px;background:#303a40"></div></div></div>
<div class="td" style="left:1597.4px;width:164.0px;top:395.25px;color:#66686c">X-NW</div>
<div class="td" style="left:1761.4px;width:164.0px;top:379.75px;color:#66686c">重庆三峡柑橘气象<br>站0085</div>
<div class="tag" style="left:1973px;top:397.75px;width:69px;color:#4caf50;background:#eef8ef;border-color:#a9dbab">子设备</div>
<div class="tag" style="left:2148px;top:397.75px;width:47px;color:#4caf50;background:#eef8ef;border-color:#a9dbab">http</div>
<div class="tag" style="left:2309px;top:397.75px;width:53px;color:#2a56d6;background:#f2f2f4;border-color:#c6c7cb">蜂窝</div>
<div class="td" style="left:2417.4px;width:164.0px;top:379.75px;color:#66686c">2024-12-18<br>17:39:34</div>
<div class="td" style="left:2581.4px;width:266.6px;top:395.25px"><span class="lnk">产品开发</span><span class="sep">/</span><span class="lnk">编辑</span><span class="sep">/</span><span class="lnk">删除</span></div>
<div class="a" style="left:672px;top:453.14px;width:2176px;height:83.58px;background:#fafafa;border-top:1px solid #e6e6e8"></div>
<div class="td" style="left:688px;top:478.83px;text-align:left;color:#66686c">4</div>
<div class="td" style="left:764.2px;width:177.6px;top:478.83px;color:#66686c">73</div>
<div class="td" style="left:941.8px;width:163.6px;top:463.33px;color:#66686c">重庆三峡柑橘气象<br>站0086</div>
<div class="td" style="left:1105.4px;width:164.0px;top:478.83px;color:#66686c">农业小型气象站</div>
<div class="td" style="left:1269.4px;width:164.0px;top:478.83px;color:#66686c">精迅畅通</div>
<div class="a" style="left:1489px;top:471.54px;width:53px;height:38px"><div style="position:absolute;left:0;top:0;width:53px;height:38px;overflow:hidden;background:#aab9c9"><div style="position:absolute;left:0;top:0;width:53px;height:5px;background:#b9c6d2"></div><div style="position:absolute;left:0;top:3px;width:4px;height:33px;background:#4a6a92"></div><div style="position:absolute;left:4px;top:4.5px;width:43px;height:29px;background:#4a5b74"></div><div style="position:absolute;left:5.5px;top:6px;width:9px;height:14.5px;background:#cfd9e0"></div><div style="position:absolute;left:14.7px;top:6px;width:9.7px;height:7px;background:#8fa6a8"></div><div style="position:absolute;left:14.7px;top:13.5px;width:9.7px;height:7.5px;background:#465670"></div><div style="position:absolute;left:25px;top:6px;width:2px;height:15px;background:#8b9db3"></div><div style="position:absolute;left:28px;top:6px;width:17px;height:5.5px;background:#b7c5d2"></div><div style="position:absolute;left:28.8px;top:12px;width:14px;height:9.5px;background:#3b4b66"></div><div style="position:absolute;left:5.4px;top:23px;width:38.7px;height:10px;background:#d3dde6"></div><div style="position:absolute;left:17.5px;top:24px;width:3.5px;height:8px;background:#5a6c86"></div><div style="position:absolute;left:28.8px;top:23.3px;width:5.6px;height:4px;background:#3d4e6a"></div><div style="position:absolute;left:4px;top:33.3px;width:45px;height:4.2px;background:#b8c6d3"></div><div style="position:absolute;left:47px;top:4px;width:6px;height:34px;background:#a9b6c2"></div><div style="position:absolute;left:48px;top:22px;width:3px;height:3px;background:#303a40"></div></div></div>
<div class="td" style="left:1597.4px;width:164.0px;top:478.83px;color:#66686c">X-NW</div>
<div class="td" style="left:1761.4px;width:164.0px;top:463.33px;color:#66686c">重庆三峡柑橘气象<br>站0086</div>
<div class="tag" style="left:1973px;top:481.33px;width:69px;color:#4caf50;background:#eef8ef;border-color:#a9dbab">子设备</div>
<div class="tag" style="left:2148px;top:481.33px;width:47px;color:#4caf50;background:#eef8ef;border-color:#a9dbab">http</div>
<div class="tag" style="left:2309px;top:481.33px;width:53px;color:#2a56d6;background:#f2f2f4;border-color:#c6c7cb">蜂窝</div>
<div class="td" style="left:2417.4px;width:164.0px;top:463.33px;color:#66686c">2024-12-18<br>17:39:34</div>
<div class="td" style="left:2581.4px;width:266.6px;top:478.83px"><span class="lnk">产品开发</span><span class="sep">/</span><span class="lnk">编辑</span><span class="sep">/</span><span class="lnk">删除</span></div>
<div class="a" style="left:672px;top:536.72px;width:2176px;height:83.58px;background:#fff;border-top:1px solid #e6e6e8"></div>
<div class="td" style="left:688px;top:562.41px;text-align:left;color:#66686c">5</div>
<div class="td" style="left:764.2px;width:177.6px;top:562.41px;color:#66686c">74</div>
<div class="td" style="left:941.8px;width:163.6px;top:546.91px;color:#66686c">重庆三峡柑橘气象<br>站0087</div>
<div class="td" style="left:1105.4px;width:164.0px;top:562.41px;color:#66686c">农业小型气象站</div>
<div class="td" style="left:1269.4px;width:164.0px;top:562.41px;color:#66686c">精迅畅通</div>
<div class="a" style="left:1489px;top:555.12px;width:53px;height:38px"><div style="position:absolute;left:0;top:0;width:53px;height:38px;overflow:hidden;background:#aab9c9"><div style="position:absolute;left:0;top:0;width:53px;height:5px;background:#b9c6d2"></div><div style="position:absolute;left:0;top:3px;width:4px;height:33px;background:#4a6a92"></div><div style="position:absolute;left:4px;top:4.5px;width:43px;height:29px;background:#4a5b74"></div><div style="position:absolute;left:5.5px;top:6px;width:9px;height:14.5px;background:#cfd9e0"></div><div style="position:absolute;left:14.7px;top:6px;width:9.7px;height:7px;background:#8fa6a8"></div><div style="position:absolute;left:14.7px;top:13.5px;width:9.7px;height:7.5px;background:#465670"></div><div style="position:absolute;left:25px;top:6px;width:2px;height:15px;background:#8b9db3"></div><div style="position:absolute;left:28px;top:6px;width:17px;height:5.5px;background:#b7c5d2"></div><div style="position:absolute;left:28.8px;top:12px;width:14px;height:9.5px;background:#3b4b66"></div><div style="position:absolute;left:5.4px;top:23px;width:38.7px;height:10px;background:#d3dde6"></div><div style="position:absolute;left:17.5px;top:24px;width:3.5px;height:8px;background:#5a6c86"></div><div style="position:absolute;left:28.8px;top:23.3px;width:5.6px;height:4px;background:#3d4e6a"></div><div style="position:absolute;left:4px;top:33.3px;width:45px;height:4.2px;background:#b8c6d3"></div><div style="position:absolute;left:47px;top:4px;width:6px;height:34px;background:#a9b6c2"></div><div style="position:absolute;left:48px;top:22px;width:3px;height:3px;background:#303a40"></div></div></div>
<div class="td" style="left:1597.4px;width:164.0px;top:562.41px;color:#66686c">X-NW</div>
<div class="td" style="left:1761.4px;width:164.0px;top:546.91px;color:#66686c">重庆三峡柑橘气象<br>站0087</div>
<div class="tag" style="left:1973px;top:564.91px;width:69px;color:#4caf50;background:#eef8ef;border-color:#a9dbab">子设备</div>
<div class="tag" style="left:2148px;top:564.91px;width:47px;color:#4caf50;background:#eef8ef;border-color:#a9dbab">http</div>
<div class="tag" style="left:2309px;top:564.91px;width:53px;color:#2a56d6;background:#f2f2f4;border-color:#c6c7cb">蜂窝</div>
<div class="td" style="left:2417.4px;width:164.0px;top:546.91px;color:#66686c">2024-12-18<br>17:39:34</div>
<div class="td" style="left:2581.4px;width:266.6px;top:562.41px"><span class="lnk">产品开发</span><span class="sep">/</span><span class="lnk">编辑</span><span class="sep">/</span><span class="lnk">删除</span></div>
<div class="a" style="left:672px;top:620.30px;width:2176px;height:83.58px;background:#fafafa;border-top:1px solid #e6e6e8"></div>
<div class="td" style="left:688px;top:645.99px;text-align:left;color:#66686c">6</div>
<div class="td" style="left:764.2px;width:177.6px;top:645.99px;color:#66686c">75</div>
<div class="td" style="left:941.8px;width:163.6px;top:630.49px;color:#66686c">重庆三峡柑橘气象<br>站0088</div>
<div class="td" style="left:1105.4px;width:164.0px;top:645.99px;color:#66686c">农业小型气象站</div>
<div class="td" style="left:1269.4px;width:164.0px;top:645.99px;color:#66686c">精迅畅通</div>
<div class="a" style="left:1489px;top:638.70px;width:53px;height:38px"><div style="position:absolute;left:0;top:0;width:53px;height:38px;overflow:hidden;background:#aab9c9"><div style="position:absolute;left:0;top:0;width:53px;height:5px;background:#b9c6d2"></div><div style="position:absolute;left:0;top:3px;width:4px;height:33px;background:#4a6a92"></div><div style="position:absolute;left:4px;top:4.5px;width:43px;height:29px;background:#4a5b74"></div><div style="position:absolute;left:5.5px;top:6px;width:9px;height:14.5px;background:#cfd9e0"></div><div style="position:absolute;left:14.7px;top:6px;width:9.7px;height:7px;background:#8fa6a8"></div><div style="position:absolute;left:14.7px;top:13.5px;width:9.7px;height:7.5px;background:#465670"></div><div style="position:absolute;left:25px;top:6px;width:2px;height:15px;background:#8b9db3"></div><div style="position:absolute;left:28px;top:6px;width:17px;height:5.5px;background:#b7c5d2"></div><div style="position:absolute;left:28.8px;top:12px;width:14px;height:9.5px;background:#3b4b66"></div><div style="position:absolute;left:5.4px;top:23px;width:38.7px;height:10px;background:#d3dde6"></div><div style="position:absolute;left:17.5px;top:24px;width:3.5px;height:8px;background:#5a6c86"></div><div style="position:absolute;left:28.8px;top:23.3px;width:5.6px;height:4px;background:#3d4e6a"></div><div style="position:absolute;left:4px;top:33.3px;width:45px;height:4.2px;background:#b8c6d3"></div><div style="position:absolute;left:47px;top:4px;width:6px;height:34px;background:#a9b6c2"></div><div style="position:absolute;left:48px;top:22px;width:3px;height:3px;background:#303a40"></div></div></div>
<div class="td" style="left:1597.4px;width:164.0px;top:645.99px;color:#66686c">X-NW</div>
<div class="td" style="left:1761.4px;width:164.0px;top:630.49px;color:#66686c">重庆三峡柑橘气象<br>站0088</div>
<div class="tag" style="left:1973px;top:648.49px;width:69px;color:#4caf50;background:#eef8ef;border-color:#a9dbab">子设备</div>
<div class="tag" style="left:2148px;top:648.49px;width:47px;color:#4caf50;background:#eef8ef;border-color:#a9dbab">http</div>
<div class="tag" style="left:2309px;top:648.49px;width:53px;color:#2a56d6;background:#f2f2f4;border-color:#c6c7cb">蜂窝</div>
<div class="td" style="left:2417.4px;width:164.0px;top:630.49px;color:#66686c">2024-12-18<br>17:39:35</div>
<div class="td" style="left:2581.4px;width:266.6px;top:645.99px"><span class="lnk">产品开发</span><span class="sep">/</span><span class="lnk">编辑</span><span class="sep">/</span><span class="lnk">删除</span></div>
<div class="a" style="left:672px;top:703.88px;width:2176px;height:83.58px;background:#fff;border-top:1px solid #e6e6e8"></div>
<div class="td" style="left:688px;top:729.57px;text-align:left;color:#66686c">7</div>
<div class="td" style="left:764.2px;width:177.6px;top:729.57px;color:#66686c">76</div>
<div class="td" style="left:941.8px;width:163.6px;top:714.07px;color:#66686c">重庆三峡柑橘温湿<br>度传感器0a-d6</div>
<div class="td" style="left:1105.4px;width:164.0px;top:729.57px;color:#66686c">农业小型气象站</div>
<div class="td" style="left:1269.4px;width:164.0px;top:729.57px;color:#66686c">精迅畅通</div>
<div class="a" style="left:1489px;top:722.28px;width:53px;height:38px"><div style="position:absolute;left:0;top:0;width:53px;height:38px;overflow:hidden;background:#aab9c9"><div style="position:absolute;left:0;top:0;width:53px;height:5px;background:#b9c6d2"></div><div style="position:absolute;left:0;top:3px;width:4px;height:33px;background:#4a6a92"></div><div style="position:absolute;left:4px;top:4.5px;width:43px;height:29px;background:#4a5b74"></div><div style="position:absolute;left:5.5px;top:6px;width:9px;height:14.5px;background:#cfd9e0"></div><div style="position:absolute;left:14.7px;top:6px;width:9.7px;height:7px;background:#8fa6a8"></div><div style="position:absolute;left:14.7px;top:13.5px;width:9.7px;height:7.5px;background:#465670"></div><div style="position:absolute;left:25px;top:6px;width:2px;height:15px;background:#8b9db3"></div><div style="position:absolute;left:28px;top:6px;width:17px;height:5.5px;background:#b7c5d2"></div><div style="position:absolute;left:28.8px;top:12px;width:14px;height:9.5px;background:#3b4b66"></div><div style="position:absolute;left:5.4px;top:23px;width:38.7px;height:10px;background:#d3dde6"></div><div style="position:absolute;left:17.5px;top:24px;width:3.5px;height:8px;background:#5a6c86"></div><div style="position:absolute;left:28.8px;top:23.3px;width:5.6px;height:4px;background:#3d4e6a"></div><div style="position:absolute;left:4px;top:33.3px;width:45px;height:4.2px;background:#b8c6d3"></div><div style="position:absolute;left:47px;top:4px;width:6px;height:34px;background:#a9b6c2"></div><div style="position:absolute;left:48px;top:22px;width:3px;height:3px;background:#303a40"></div></div></div>
<div class="td" style="left:1597.4px;width:164.0px;top:729.57px;color:#66686c">X-NW</div>
<div class="td" style="left:1761.4px;width:164.0px;top:714.07px;color:#66686c">重庆三峡柑橘温湿<br>度传感器0a-d6</div>
<div class="tag" style="left:1973px;top:732.07px;width:69px;color:#4caf50;background:#eef8ef;border-color:#a9dbab">子设备</div>
<div class="tag" style="left:2148px;top:732.07px;width:47px;color:#4caf50;background:#eef8ef;border-color:#a9dbab">http</div>
<div class="tag" style="left:2309px;top:732.07px;width:53px;color:#2a56d6;background:#f2f2f4;border-color:#c6c7cb">蜂窝</div>
<div class="td" style="left:2417.4px;width:164.0px;top:714.07px;color:#66686c">2024-12-18<br>17:39:35</div>
<div class="td" style="left:2581.4px;width:266.6px;top:729.57px"><span class="lnk">产品开发</span><span class="sep">/</span><span class="lnk">编辑</span><span class="sep">/</span><span class="lnk">删除</span></div>
<div class="a" style="left:672px;top:787.46px;width:2176px;height:83.58px;background:#fafafa;border-top:1px solid #e6e6e8"></div>
<div class="td" style="left:688px;top:813.15px;text-align:left;color:#66686c">8</div>
<div class="td" style="left:764.2px;width:177.6px;top:813.15px;color:#66686c">77</div>
<div class="td" style="left:941.8px;width:163.6px;top:797.65px;color:#66686c">重庆三峡柑橘温湿<br>度传感器0a-d5</div>
<div class="td" style="left:1105.4px;width:164.0px;top:813.15px;color:#66686c">农业小型气象站</div>
<div class="td" style="left:1269.4px;width:164.0px;top:813.15px;color:#66686c">精迅畅通</div>
<div class="a" style="left:1489px;top:805.86px;width:53px;height:38px"><div style="position:absolute;left:0;top:0;width:53px;height:38px;overflow:hidden;background:#aab9c9"><div style="position:absolute;left:0;top:0;width:53px;height:5px;background:#b9c6d2"></div><div style="position:absolute;left:0;top:3px;width:4px;height:33px;background:#4a6a92"></div><div style="position:absolute;left:4px;top:4.5px;width:43px;height:29px;background:#4a5b74"></div><div style="position:absolute;left:5.5px;top:6px;width:9px;height:14.5px;background:#cfd9e0"></div><div style="position:absolute;left:14.7px;top:6px;width:9.7px;height:7px;background:#8fa6a8"></div><div style="position:absolute;left:14.7px;top:13.5px;width:9.7px;height:7.5px;background:#465670"></div><div style="position:absolute;left:25px;top:6px;width:2px;height:15px;background:#8b9db3"></div><div style="position:absolute;left:28px;top:6px;width:17px;height:5.5px;background:#b7c5d2"></div><div style="position:absolute;left:28.8px;top:12px;width:14px;height:9.5px;background:#3b4b66"></div><div style="position:absolute;left:5.4px;top:23px;width:38.7px;height:10px;background:#d3dde6"></div><div style="position:absolute;left:17.5px;top:24px;width:3.5px;height:8px;background:#5a6c86"></div><div style="position:absolute;left:28.8px;top:23.3px;width:5.6px;height:4px;background:#3d4e6a"></div><div style="position:absolute;left:4px;top:33.3px;width:45px;height:4.2px;background:#b8c6d3"></div><div style="position:absolute;left:47px;top:4px;width:6px;height:34px;background:#a9b6c2"></div><div style="position:absolute;left:48px;top:22px;width:3px;height:3px;background:#303a40"></div></div></div>
<div class="td" style="left:1597.4px;width:164.0px;top:813.15px;color:#66686c">X-NW</div>
<div class="td" style="left:1761.4px;width:164.0px;top:797.65px;color:#66686c">重庆三峡柑橘温湿<br>度传感器0a-d5</div>
<div class="tag" style="left:1973px;top:815.65px;width:69px;color:#4caf50;background:#eef8ef;border-color:#a9dbab">子设备</div>
<div class="tag" style="left:2148px;top:815.65px;width:47px;color:#4caf50;background:#eef8ef;border-color:#a9dbab">http</div>
<div class="tag" style="left:2309px;top:815.65px;width:53px;color:#2a56d6;background:#f2f2f4;border-color:#c6c7cb">蜂窝</div>
<div class="td" style="left:2417.4px;width:164.0px;top:797.65px;color:#66686c">2024-12-18<br>17:39:35</div>
<div class="td" style="left:2581.4px;width:266.6px;top:813.15px"><span class="lnk">产品开发</span><span class="sep">/</span><span class="lnk">编辑</span><span class="sep">/</span><span class="lnk">删除</span></div>
<div class="a" style="left:672px;top:871.04px;width:2176px;height:83.58px;background:#fff;border-top:1px solid #e6e6e8"></div>
<div class="td" style="left:688px;top:896.73px;text-align:left;color:#66686c">9</div>
<div class="td" style="left:764.2px;width:177.6px;top:896.73px;color:#66686c">78</div>
<div class="td" style="left:941.8px;width:163.6px;top:881.23px;color:#66686c">重庆三峡柑橘温湿<br>度传感器0a-f3</div>
<div class="td" style="left:1105.4px;width:164.0px;top:896.73px;color:#66686c">农业小型气象站</div>
<div class="td" style="left:1269.4px;width:164.0px;top:896.73px;color:#66686c">精迅畅通</div>
<div class="a" style="left:1489px;top:889.44px;width:53px;height:38px"><div style="position:absolute;left:0;top:0;width:53px;height:38px;overflow:hidden;background:#aab9c9"><div style="position:absolute;left:0;top:0;width:53px;height:5px;background:#b9c6d2"></div><div style="position:absolute;left:0;top:3px;width:4px;height:33px;background:#4a6a92"></div><div style="position:absolute;left:4px;top:4.5px;width:43px;height:29px;background:#4a5b74"></div><div style="position:absolute;left:5.5px;top:6px;width:9px;height:14.5px;background:#cfd9e0"></div><div style="position:absolute;left:14.7px;top:6px;width:9.7px;height:7px;background:#8fa6a8"></div><div style="position:absolute;left:14.7px;top:13.5px;width:9.7px;height:7.5px;background:#465670"></div><div style="position:absolute;left:25px;top:6px;width:2px;height:15px;background:#8b9db3"></div><div style="position:absolute;left:28px;top:6px;width:17px;height:5.5px;background:#b7c5d2"></div><div style="position:absolute;left:28.8px;top:12px;width:14px;height:9.5px;background:#3b4b66"></div><div style="position:absolute;left:5.4px;top:23px;width:38.7px;height:10px;background:#d3dde6"></div><div style="position:absolute;left:17.5px;top:24px;width:3.5px;height:8px;background:#5a6c86"></div><div style="position:absolute;left:28.8px;top:23.3px;width:5.6px;height:4px;background:#3d4e6a"></div><div style="position:absolute;left:4px;top:33.3px;width:45px;height:4.2px;background:#b8c6d3"></div><div style="position:absolute;left:47px;top:4px;width:6px;height:34px;background:#a9b6c2"></div><div style="position:absolute;left:48px;top:22px;width:3px;height:3px;background:#303a40"></div></div></div>
<div class="td" style="left:1597.4px;width:164.0px;top:896.73px;color:#66686c">X-NW</div>
<div class="td" style="left:1761.4px;width:164.0px;top:881.23px;color:#66686c">重庆三峡柑橘温湿<br>度传感器0a-f3</div>
<div class="tag" style="left:1973px;top:899.23px;width:69px;color:#4caf50;background:#eef8ef;border-color:#a9dbab">子设备</div>
<div class="tag" style="left:2148px;top:899.23px;width:47px;color:#4caf50;background:#eef8ef;border-color:#a9dbab">http</div>
<div class="tag" style="left:2309px;top:899.23px;width:53px;color:#2a56d6;background:#f2f2f4;border-color:#c6c7cb">蜂窝</div>
<div class="td" style="left:2417.4px;width:164.0px;top:881.23px;color:#66686c">2024-12-18<br>17:39:35</div>
<div class="td" style="left:2581.4px;width:266.6px;top:896.73px"><span class="lnk">产品开发</span><span class="sep">/</span><span class="lnk">编辑</span><span class="sep">/</span><span class="lnk">删除</span></div>
<div class="a" style="left:672px;top:954.62px;width:2176px;height:83.58px;background:#fafafa;border-top:1px solid #e6e6e8"></div>
<div class="td" style="left:688px;top:980.31px;text-align:left;color:#66686c">10</div>
<div class="td" style="left:764.2px;width:177.6px;top:980.31px;color:#66686c">79</div>
<div class="td" style="left:941.8px;width:163.6px;top:964.81px;color:#66686c">重庆三峡柑橘温湿<br>度传感器0a-f5</div>
<div class="td" style="left:1105.4px;width:164.0px;top:980.31px;color:#66686c">农业小型气象站</div>
<div class="td" style="left:1269.4px;width:164.0px;top:980.31px;color:#66686c">精迅畅通</div>
<div class="a" style="left:1489px;top:973.02px;width:53px;height:38px"><div style="position:absolute;left:0;top:0;width:53px;height:38px;overflow:hidden;background:#aab9c9"><div style="position:absolute;left:0;top:0;width:53px;height:5px;background:#b9c6d2"></div><div style="position:absolute;left:0;top:3px;width:4px;height:33px;background:#4a6a92"></div><div style="position:absolute;left:4px;top:4.5px;width:43px;height:29px;background:#4a5b74"></div><div style="position:absolute;left:5.5px;top:6px;width:9px;height:14.5px;background:#cfd9e0"></div><div style="position:absolute;left:14.7px;top:6px;width:9.7px;height:7px;background:#8fa6a8"></div><div style="position:absolute;left:14.7px;top:13.5px;width:9.7px;height:7.5px;background:#465670"></div><div style="position:absolute;left:25px;top:6px;width:2px;height:15px;background:#8b9db3"></div><div style="position:absolute;left:28px;top:6px;width:17px;height:5.5px;background:#b7c5d2"></div><div style="position:absolute;left:28.8px;top:12px;width:14px;height:9.5px;background:#3b4b66"></div><div style="position:absolute;left:5.4px;top:23px;width:38.7px;height:10px;background:#d3dde6"></div><div style="position:absolute;left:17.5px;top:24px;width:3.5px;height:8px;background:#5a6c86"></div><div style="position:absolute;left:28.8px;top:23.3px;width:5.6px;height:4px;background:#3d4e6a"></div><div style="position:absolute;left:4px;top:33.3px;width:45px;height:4.2px;background:#b8c6d3"></div><div style="position:absolute;left:47px;top:4px;width:6px;height:34px;background:#a9b6c2"></div><div style="position:absolute;left:48px;top:22px;width:3px;height:3px;background:#303a40"></div></div></div>
<div class="td" style="left:1597.4px;width:164.0px;top:980.31px;color:#66686c">X-NW</div>
<div class="td" style="left:1761.4px;width:164.0px;top:964.81px;color:#66686c">重庆三峡柑橘温湿<br>度传感器0a-f5</div>
<div class="tag" style="left:1973px;top:982.81px;width:69px;color:#4caf50;background:#eef8ef;border-color:#a9dbab">子设备</div>
<div class="tag" style="left:2148px;top:982.81px;width:47px;color:#4caf50;background:#eef8ef;border-color:#a9dbab">http</div>
<div class="tag" style="left:2309px;top:982.81px;width:53px;color:#2a56d6;background:#f2f2f4;border-color:#c6c7cb">蜂窝</div>
<div class="td" style="left:2417.4px;width:164.0px;top:964.81px;color:#66686c">2024-12-18<br>17:39:35</div>
<div class="td" style="left:2581.4px;width:266.6px;top:980.31px"><span class="lnk">产品开发</span><span class="sep">/</span><span class="lnk">编辑</span><span class="sep">/</span><span class="lnk">删除</span></div>
<div class="a" style="left:672px;top:1037.5px;width:2176px;height:1px;background:#e4e7ed"></div>
<div class="a" style="left:672px;top:155px;width:1px;height:883px;background:#ebeef5"></div>
<div class="a" style="left:2847px;top:155px;width:1px;height:883px;background:#ebeef5"></div>
<div class="a" style="left:2222px;top:1065px;font-size:16px;line-height:24px;color:#606266">共 50 条</div>
<div class="a" style="left:2304px;top:1059px;width:133px;height:36px;border:1px solid #dcdfe6"></div>
<div class="a" style="left:2315px;top:1065px;font-size:16px;line-height:24px;color:#303133">10条/页</div>
<svg style="left:2409px;top:1072px" width="18" height="12"><path d="M2 2.5 L 8.5 9 L 15 2.5" fill="none" stroke="#3b5bdb" stroke-width="1.5"/></svg>
<svg style="left:2466px;top:1068px" width="16" height="18"><path d="M11 2.5 L 5 9 L 11 15.5" fill="none" stroke="#c0c4cc" stroke-width="1.4"/></svg>
<div class="a" style="left:2496.5px;width:20px;text-align:center;top:1065px;font-size:16px;line-height:24px;color:#2252d3;font-weight:bold">1</div>
<div class="a" style="left:2528.7px;width:20px;text-align:center;top:1065px;font-size:16px;line-height:24px;color:#303133">2</div>
<div class="a" style="left:2560.5px;width:20px;text-align:center;top:1065px;font-size:16px;line-height:24px;color:#303133">3</div>
<div class="a" style="left:2592.7px;width:20px;text-align:center;top:1065px;font-size:16px;line-height:24px;color:#303133">4</div>
<div class="a" style="left:2624.3px;width:20px;text-align:center;top:1065px;font-size:16px;line-height:24px;color:#303133">5</div>
<svg style="left:2659px;top:1068px" width="16" height="18"><path d="M5 2.5 L 11 9 L 5 15.5" fill="none" stroke="#303133" stroke-width="1.4"/></svg>
<div class="a" style="left:2704px;top:1065px;font-size:16px;line-height:24px;color:#606266">前往</div>
<div class="a" style="left:2747px;top:1059px;width:74px;height:36px;border:1px solid #dcdfe6;text-align:center;font-size:16px;line-height:34px;color:#606266">1</div>
<div class="a" style="left:2831px;top:1065px;font-size:16px;line-height:24px;color:#606266">页</div>
</body></html>
